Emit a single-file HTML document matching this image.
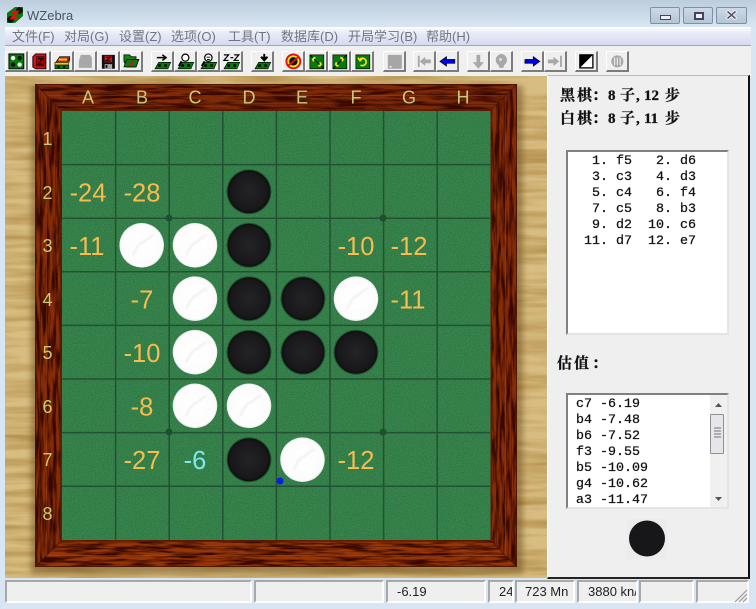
<!DOCTYPE html>
<html><head><meta charset="utf-8"><style>
html,body{margin:0;padding:0}
body{width:756px;height:609px;overflow:hidden;position:relative;background:#d8e5f3;font-family:"Liberation Sans","Noto Sans CJK SC",sans-serif}
.a{position:absolute}
#title{left:0;top:0;width:756px;height:27px;background:linear-gradient(#bccddd,#d9e5f2)}
.wb{top:7px;height:15px;border:1px solid #7f90a6;border-radius:2px;background:linear-gradient(#ccd9e6,#c0cfdf 50%,#b5c6d8)}
#menu{left:5px;top:27px;width:746px;height:18px;background:linear-gradient(#fdfdff,#e8ebf7 35%,#d6daf0);font-size:13px;color:#6f7582;line-height:19px;border-bottom:1px solid #a7a7a7}
#menu span{position:absolute;top:0;white-space:nowrap}
#tool{left:5px;top:46px;width:746px;height:30px;background:#f0f0f0}
.b{position:absolute;top:51px;width:20px;height:18px;background:#efefef;border-top:1px solid #fff;border-left:1px solid #fff;border-right:2px solid #7c7c7c;border-bottom:2px solid #7c7c7c;box-sizing:content-box}
.b svg{display:block;position:absolute;left:0;top:0;transform:scale(.93);transform-origin:2px 1px}
#panel{left:547px;top:75px;background:#efefef;border-top:1px solid #bbb;border-left:1px solid #fff;border-right:2px solid #111;border-bottom:2px solid #222;box-sizing:border-box;width:203px;height:504px}
.cj{font-family:"Liberation Serif","Noto Serif CJK SC",serif;font-weight:bold;color:#111;font-size:15px;white-space:pre;line-height:20px;-webkit-text-stroke:.3px #111}
.cj span{position:absolute;top:0}
.lb{background:#fff;border-top:2px solid #808080;border-left:2px solid #808080;border-right:2px solid #e4e4e4;border-bottom:2px solid #e4e4e4;box-sizing:border-box}
pre{margin:0;font-family:"Liberation Mono",monospace;font-size:13.33px;line-height:16px;color:#111;-webkit-text-stroke:.25px #111}
.st{position:absolute;top:580px;height:23px;background:#efefef;border-top:2px solid #a8a8a8;border-left:2px solid #a8a8a8;border-bottom:2px solid #fff;border-right:2px solid #fff;box-sizing:border-box;font-size:13px;line-height:19px;color:#222;overflow:hidden;white-space:nowrap}
</style></head><body>
<div class="a" id="title"></div>
<svg class="a" style="left:6px;top:6px" width="18" height="18" viewBox="0 0 18 18"><polygon points="1,7 9,1 17,1 17,10 9,17 1,17" fill="#0a7a10"/><circle cx="4.500" cy="13.500" r="3.400" fill="#111"/><circle cx="13.500" cy="4.500" r="3.400" fill="#111"/><path d="M5 6H11L6 12H12" stroke="#e01010" stroke-width="2.400" fill="none"/></svg>
<div class="a" style="left:27px;top:7px;font-size:13px;line-height:18px;color:#4c5561">WZebra</div>
<div class="a wb" style="left:650px;width:28px"></div>
<div class="a wb" style="left:683px;width:28px"></div>
<div class="a wb" style="left:716px;width:29px"></div>
<div class="a" style="left:660px;top:15px;width:9px;height:3px;border:1px solid #445;background:#eef"></div>
<div class="a" style="left:694px;top:12px;width:6px;height:4px;border:2px solid #445;background:#eef"></div>
<svg class="a" style="left:726px;top:10px" width="12" height="10"><path d="M1 1L10 9M10 1L1 9" stroke="#eef3f8" stroke-width="3.600"/><path d="M1.500 1.500L9.500 8.500M9.500 1.500L1.500 8.500" stroke="#556" stroke-width="1.500"/></svg>

<div class="a" id="menu">
<span style="left:7px">文件(F)</span><span style="left:59px">对局(G)</span><span style="left:114px">设置(Z)</span><span style="left:166px">选项(O)</span><span style="left:223px">工具(T)</span><span style="left:276px">数据库(D)</span><span style="left:343px">开局学习(B)</span><span style="left:421px">帮助(H)</span>
</div>
<div class="a" id="tool"></div>

<svg width="0" height="0" style="position:absolute"><defs>
<g id="gb"><polygon points="7,11 20,11 17,18 3,18" fill="#067a0a" stroke="#000" stroke-width=".6"/><circle cx="8" cy="14.500" r="1.600" fill="#000"/><circle cx="14.500" cy="14.500" r="1.600" fill="#000"/></g>
</defs></svg>

<!-- toolbar buttons -->
<div class="b" style="left:5px"><svg width="22" height="20"><rect x="3" y="2" width="16" height="16" fill="#067a0a" stroke="#000"/><circle cx="7.500" cy="6.500" r="2.300" fill="#fff"/><circle cx="14.500" cy="6.500" r="2.300" fill="#000"/><circle cx="7.500" cy="13.500" r="2.300" fill="#000"/><circle cx="14.500" cy="13.500" r="2.300" fill="#fff"/></svg></div>
<div class="b" style="left:28px"><svg width="22" height="20"><path d="M4 5L7 2H18V18H7L4 16Z" fill="#e01010" stroke="#000"/><rect x="8" y="5" width="8" height="10" fill="#b00000" stroke="#000" stroke-width=".6"/><path d="M9.500 7H14.500L9.500 13H14.500" stroke="#000" stroke-width="1.200" fill="none"/></svg></div>
<div class="b" style="left:51px"><svg width="22" height="20"><polygon points="4,11 8,5 19,5 17,11" fill="#e01010" stroke="#000" stroke-width=".7"/><path d="M7 8H16" stroke="#ffe000" stroke-width="2"/><polygon points="3,11 17,11 19,6 19,9 17,14 3,14" fill="#f0d000" stroke="#000" stroke-width=".6"/><rect x="3" y="14" width="15" height="4" fill="#067a0a" stroke="#000" stroke-width=".6"/><circle cx="7" cy="16" r="1.300" fill="#000"/><circle cx="13" cy="16" r="1.300" fill="#000"/></svg></div>
<div class="b" style="left:74px"><svg width="22" height="20"><path d="M6 3H16L18 6V17H4V10Z" fill="#a8a8a8"/></svg></div>
<div class="b" style="left:97px"><svg width="22" height="20"><path d="M4 3H18V18H4Z" fill="#111"/><path d="M7 4H15V11H7Z" fill="#e01010"/><path d="M8.500 5.500H13.500L8.500 9.500H13.500" stroke="#000" stroke-width="1.100" fill="none"/><rect x="7" y="13" width="8" height="5" fill="#a8a8a8"/><rect x="8" y="14" width="2" height="3" fill="#111"/></svg></div>
<div class="b" style="left:120px"><svg width="22" height="20"><path d="M3 3H9L11 5H16V8H19L16 16H6L3 10Z" fill="#0a8a10" stroke="#000" stroke-width=".8"/><polygon points="6,8 19,8 16,16 3,16" fill="#0e7a14" stroke="#000" stroke-width=".7"/><path d="M8 10H13L9 14H14" stroke="#d01010" stroke-width="1.400" fill="none"/></svg></div>

<div class="b" style="left:151px"><svg width="22" height="20"><use href="#gb"/><path d="M5 6H14M11 3L15 6L11 9" stroke="#000" stroke-width="1.600" fill="none"/></svg></div>
<div class="b" style="left:174px"><svg width="22" height="20"><use href="#gb"/><circle cx="11" cy="6" r="3.800" fill="#fff" stroke="#000" stroke-width="1.300"/><path d="M7 10L4 15" stroke="#000" stroke-width="2.200"/></svg></div>
<div class="b" style="left:197px"><svg width="22" height="20"><use href="#gb"/><circle cx="11" cy="6" r="4" fill="#fff" stroke="#000" stroke-width="1.300"/><path d="M9 5.500H13M9.500 8H12.500" stroke="#000" stroke-width="1"/><path d="M7 10L4 15" stroke="#000" stroke-width="2.200"/></svg></div>
<div class="b" style="left:220px"><svg width="22" height="20"><use href="#gb"/><path d="M3 3H8L3 9H8M10 6H13M14 3H19L14 9H19" stroke="#000" stroke-width="1.300" fill="none"/></svg></div>

<div class="b" style="left:251px"><svg width="22" height="20"><use href="#gb"/><path d="M13 2V7M9.500 5L13 9L16.500 5" stroke="#000" stroke-width="2" fill="#000"/></svg></div>

<div class="b" style="left:282px"><svg width="22" height="20"><circle cx="11" cy="10" r="7.500" fill="#f6e020" stroke="#e01010" stroke-width="2"/><circle cx="11" cy="10" r="4.500" fill="#111"/><path d="M5 15L17 5" stroke="#e01010" stroke-width="2"/></svg></div>
<div class="b" style="left:305px"><svg width="22" height="20"><rect x="4" y="3" width="15" height="15" fill="#067a0a" stroke="#000" stroke-width=".7"/><path d="M4 3L19 18" stroke="#000" stroke-width="1"/><path d="M7 7L10 6M7 7L8 10M16 14L13 15M16 14L15 11" stroke="#f6e020" stroke-width="2" fill="none"/></svg></div>
<div class="b" style="left:328px"><svg width="22" height="20"><rect x="4" y="3" width="15" height="15" fill="#067a0a" stroke="#000" stroke-width=".7"/><path d="M19 3L4 18" stroke="#000" stroke-width="1"/><path d="M15 7L12 6M15 7L14 10M7 14L10 15M7 14L8 11" stroke="#f6e020" stroke-width="2" fill="none"/></svg></div>
<div class="b" style="left:351px"><svg width="22" height="20"><rect x="4" y="3" width="15" height="15" fill="#067a0a" stroke="#000" stroke-width=".7"/><path d="M8 8A4 4 0 1 1 9 14" stroke="#f6e020" stroke-width="1.800" fill="none"/><path d="M6 6L8.500 9.500L11 7" stroke="#f6e020" stroke-width="1.500" fill="none"/></svg></div>

<div class="b" style="left:383px"><svg width="22" height="20"><rect x="4" y="3" width="15" height="15" fill="#a6a6a6"/><rect x="6" y="15" width="2" height="1.500" fill="#fff"/></svg></div>

<div class="b" style="left:413px"><svg width="22" height="20"><path d="M5 4V16" stroke="#a8a8a8" stroke-width="2"/><polygon points="6,10 12,5 12,8 18,8 18,12 12,12 12,15" fill="#a8a8a8"/></svg></div>
<div class="b" style="left:436px"><svg width="22" height="20"><polygon points="3,10 10,5 10,8 19,8 19,12 10,12 10,15" fill="#0000e0" stroke="#000" stroke-width=".8"/></svg></div>

<div class="b" style="left:467px"><svg width="22" height="20"><polygon points="11,18 5,11 9,11 9,3 13,3 13,11 17,11" fill="#a8a8a8"/></svg></div>
<div class="b" style="left:490px"><svg width="22" height="20"><path d="M11 2A6.500 6.500 0 0 1 14 14L13 17H9L8 14A6.500 6.500 0 0 1 11 2Z" fill="#a8a8a8"/><circle cx="10" cy="8" r="1.600" fill="#e0e0e0"/></svg></div>

<div class="b" style="left:521px"><svg width="22" height="20"><polygon points="19,10 12,5 12,8 3,8 3,12 12,12 12,15" fill="#0000e0" stroke="#000" stroke-width=".8"/></svg></div>
<div class="b" style="left:544px"><svg width="22" height="20"><polygon points="15,10 9,5 9,8 3,8 3,12 9,12 9,15" fill="#a8a8a8"/><path d="M17 4V16" stroke="#a8a8a8" stroke-width="2"/></svg></div>

<div class="b" style="left:575px"><svg width="22" height="20"><rect x="4" y="3" width="14" height="14" fill="#fff" stroke="#000" stroke-width="1.400"/><polygon points="4,3 18,3 4,17" fill="#000"/></svg></div>
<div class="b" style="left:606px"><svg width="22" height="20"><circle cx="11" cy="10" r="6.500" fill="#a8a8a8"/><path d="M8 6V14M11 6V14M14 6V14" stroke="#eee" stroke-width="1.200"/></svg></div>

<!-- board -->
<svg class="a" style="left:5px;top:76px" width="542" height="502" viewBox="5 76 542 502">
<defs>
<filter id="wood" x="0" y="0" width="100%" height="100%" color-interpolation-filters="sRGB"><feTurbulence type="fractalNoise" baseFrequency=".01 .12" numOctaves="3" seed="4"/><feColorMatrix values="0 0 0 0 .62  0 0 0 0 .46  0 0 0 0 .18  1.200 0 0 0 -.42"/></filter>
<filter id="mh" x="0" y="0" width="100%" height="100%" color-interpolation-filters="sRGB"><feTurbulence type="fractalNoise" baseFrequency=".03 .3" numOctaves="3" seed="7"/><feColorMatrix values="0 0 0 0 .22  0 0 0 0 .03  0 0 0 0 0  3.400 0 0 0 -1.350"/></filter>
<filter id="mv" x="0" y="0" width="100%" height="100%" color-interpolation-filters="sRGB"><feTurbulence type="fractalNoise" baseFrequency=".3 .03" numOctaves="3" seed="9"/><feColorMatrix values="0 0 0 0 .22  0 0 0 0 .03  0 0 0 0 0  3.400 0 0 0 -1.300"/></filter>
<filter id="felt" x="0" y="0" width="100%" height="100%" color-interpolation-filters="sRGB"><feTurbulence type="fractalNoise" baseFrequency=".9" numOctaves="2" seed="2"/><feColorMatrix values="0 0 0 0 .14  0 0 0 0 .38  0 0 0 0 .2  1.300 0 0 0 -.42"/></filter>
<filter id="bl"><feGaussianBlur stdDeviation="3"/></filter>
<filter id="sm"><feGaussianBlur stdDeviation=".8"/></filter>
<radialGradient id="wd" cx=".5" cy=".5" r=".5"><stop offset="0" stop-color="#fff"/><stop offset=".92" stop-color="#fcfcfc"/><stop offset="1" stop-color="#e8e8e8"/></radialGradient>
<radialGradient id="bd" cx=".5" cy=".5" r=".5"><stop offset="0" stop-color="#242426"/><stop offset=".85" stop-color="#18181a"/><stop offset="1" stop-color="#0f0f10"/></radialGradient>
<g id="W"><circle r="22.300" fill="url(#wd)"/><path d="M-9 10C-6 5-4-1 1-3S6-9 12-10" stroke="#f2f2f2" stroke-width="2.500" fill="none" filter="url(#sm)"/></g>
<g id="B"><circle r="22.500" fill="#12341f" opacity=".55"/><circle r="21.500" fill="url(#bd)"/></g>
</defs>
<rect x="5" y="76" width="542" height="502" fill="#d8bd82"/>
<rect x="5" y="76" width="542" height="502" filter="url(#wood)"/>
<rect x="31" y="86" width="492" height="488" fill="#5a4010" opacity=".45" filter="url(#bl)"/>
<rect x="35" y="84" width="482" height="483" fill="#802a08"/>
<polygon points="35,84 517,84 490,111 62,111" fill="#7e2a08"/>
<polygon points="35,567 517,567 490,540 62,540" fill="#963608"/>
<polygon points="35,84 62,111 62,540 35,567" fill="#852c08"/>
<polygon points="517,84 490,111 490,540 517,567" fill="#852c08"/>
<clipPath id="ch"><polygon points="35,84 517,84 490,111 62,111"/><polygon points="35,567 517,567 490,540 62,540"/></clipPath>
<clipPath id="cv"><polygon points="35,84 62,111 62,540 35,567"/><polygon points="517,84 490,111 490,540 517,567"/></clipPath>
<g clip-path="url(#ch)"><rect x="35" y="84" width="482" height="483" filter="url(#mh)"/></g>
<g clip-path="url(#cv)"><rect x="35" y="84" width="482" height="483" filter="url(#mv)"/></g>
<g fill="none" stroke-width="1">
<rect x="40.500" y="89.500" width="471" height="472" stroke="#3a0e02" opacity=".35"/>
<rect x="46.500" y="95.500" width="459" height="460" stroke="#c05a14" opacity=".3"/>
<rect x="55.500" y="104.500" width="441" height="442" stroke="#3a0e02" opacity=".35"/>
<rect x="35.500" y="84.500" width="481" height="482" stroke="#4a1404" opacity=".8"/>
</g>
<path d="M35 84L62 111M517 84L490 111M35 567L62 540M517 567L490 540" stroke="#3a0e02" stroke-width="1" opacity=".5"/>
<rect x="61" y="110" width="430" height="431" fill="none" stroke="#5a1c04" stroke-width="1.500"/>
<rect x="62" y="111" width="428.500" height="429" fill="#3a8850"/>
<rect x="62" y="111" width="428.500" height="429" filter="url(#felt)"/>
<g stroke="#225233" stroke-width="1.500">
<path d="M115.600 111V540M169.200 111V540M222.800 111V540M276.400 111V540M330 111V540M383.600 111V540M437.200 111V540"/>
<path d="M62 164.600H490M62 218.200H490M62 271.800H490M62 325.400H490M62 379H490M62 432.600H490M62 486.200H490"/>
</g>
<g fill="#1f4f30"><circle cx="169" cy="218" r="3.500"/><circle cx="383" cy="218" r="3.500"/><circle cx="169" cy="432" r="3.500"/><circle cx="383" cy="432" r="3.500"/></g>

<use href="#B" x="249" y="191.700"/><use href="#B" x="249" y="245.300"/><use href="#B" x="249" y="298.700"/><use href="#B" x="303" y="298.700"/><use href="#B" x="249" y="352.200"/><use href="#B" x="303" y="352.200"/><use href="#B" x="356" y="352.200"/><use href="#B" x="249" y="459.700"/>
<use href="#W" x="141.700" y="245.300"/><use href="#W" x="195" y="245.300"/><use href="#W" x="195" y="298.700"/><use href="#W" x="356" y="298.700"/><use href="#W" x="195" y="352.200"/><use href="#W" x="195" y="405.800"/><use href="#W" x="249" y="405.800"/><use href="#W" x="302.500" y="459.700"/>
<circle cx="280" cy="481" r="3.500" fill="#0a1ee8"/>

<g font-family="Liberation Sans" font-size="18" fill="#c8c975" text-anchor="middle">
<text x="88" y="103.500">A</text><text x="142" y="103.500">B</text><text x="195" y="103.500">C</text><text x="249" y="103.500">D</text><text x="302" y="103.500">E</text><text x="356" y="103.500">F</text><text x="409" y="103.500">G</text><text x="463" y="103.500">H</text>
<text x="47.500" y="145">1</text><text x="47.500" y="199">2</text><text x="47.500" y="252">3</text><text x="47.500" y="306">4</text><text x="47.500" y="359">5</text><text x="47.500" y="413">6</text><text x="47.500" y="466">7</text><text x="47.500" y="520">8</text>
</g>
<g font-family="Liberation Sans" font-size="25.500" fill="#f8bb4e" text-anchor="middle">
<text x="88" y="201.500">-24</text><text x="142" y="201.500">-28</text>
<text x="87" y="255">-11</text><text x="356" y="255">-10</text><text x="409" y="255">-12</text>
<text x="142" y="308.500">-7</text><text x="408" y="308.500">-11</text>
<text x="142" y="362">-10</text>
<text x="142" y="415.500">-8</text>
<text x="142" y="469">-27</text><text x="195" y="469" fill="#7fe9e6">-6</text><text x="356" y="469">-12</text>
</g>
</svg>

<!-- right panel -->
<div class="a" id="panel"></div>
<div class="a cj" style="left:0;top:86px;width:756px;height:20px"><span style="left:560px">黑</span><span style="left:577px">棋</span><span style="left:592px">：</span><span style="left:608px">8</span><span style="left:620px">子</span><span style="left:636px">,</span><span style="left:644px">12</span><span style="left:665px">步</span></div>
<div class="a cj" style="left:0;top:109px;width:756px;height:20px"><span style="left:560px">白</span><span style="left:577px">棋</span><span style="left:592px">：</span><span style="left:608px">8</span><span style="left:620px">子</span><span style="left:636px">,</span><span style="left:644px">11</span><span style="left:665px">步</span></div>
<div class="a lb" style="left:566px;top:150px;width:163px;height:185px"><pre style="margin:2px 0 0 8px">  1. f5   2. d6
  3. c3   4. d3
  5. c4   6. f4
  7. c5   8. b3
  9. d2  10. c6
 11. d7  12. e7</pre></div>
<div class="a cj" style="left:0;top:354px;width:756px;height:20px"><span style="left:557px">估</span><span style="left:574px">值</span><span style="left:592px">：</span></div>
<div class="a lb" style="left:566px;top:393px;width:163px;height:116px;overflow:hidden"><pre style="margin:2px 0 0 8px">c7 -6.19
b4 -7.48
b6 -7.52
f3 -9.55
b5 -10.09
g4 -10.62
a3 -11.47</pre>
<div class="a" style="right:0;top:0;width:17px;height:112px;background:#f0f0f0"></div>
<svg class="a" style="right:0;top:0" width="17" height="112"><path d="M5 12L8.500 8L12 12Z" fill="#555"/><path d="M5 102L8.500 106L12 102Z" fill="#555"/><rect x=".5" y="19.500" width="13" height="39" rx="1" fill="#e6e6ea" stroke="#8f8f95"/><path d="M4 33H11M4 36H11M4 39H11M4 42H11" stroke="#777" stroke-width="1"/></svg></div>
<svg class="a" style="left:627px;top:519px" width="40" height="40"><rect width="40" height="40" fill="#ececec"/><circle cx="20" cy="19.500" r="18" fill="#17171a"/></svg>

<!-- status bar -->
<div class="st" style="left:5px;width:247px"></div>
<div class="st" style="left:254px;width:130px"></div>
<div class="st" style="left:386px;width:100px;padding-left:9px">-6.19</div>
<div class="st" style="left:488px;width:26px;padding-left:9px">24</div>
<div class="st" style="left:515px;width:60px;padding-left:8px">723 Mn</div>
<div class="st" style="left:577px;width:61px;padding-left:9px">3880 kn/s</div>
<div class="st" style="left:639px;width:55px"></div>
<div class="st" style="left:696px;width:53px"></div>
<svg class="a" style="left:733px;top:588px" width="16" height="15"><path d="M2 14L14 2M6 14L14 6M10 14L14 10" stroke="#999" stroke-width="1.200"/></svg>
</body></html>
